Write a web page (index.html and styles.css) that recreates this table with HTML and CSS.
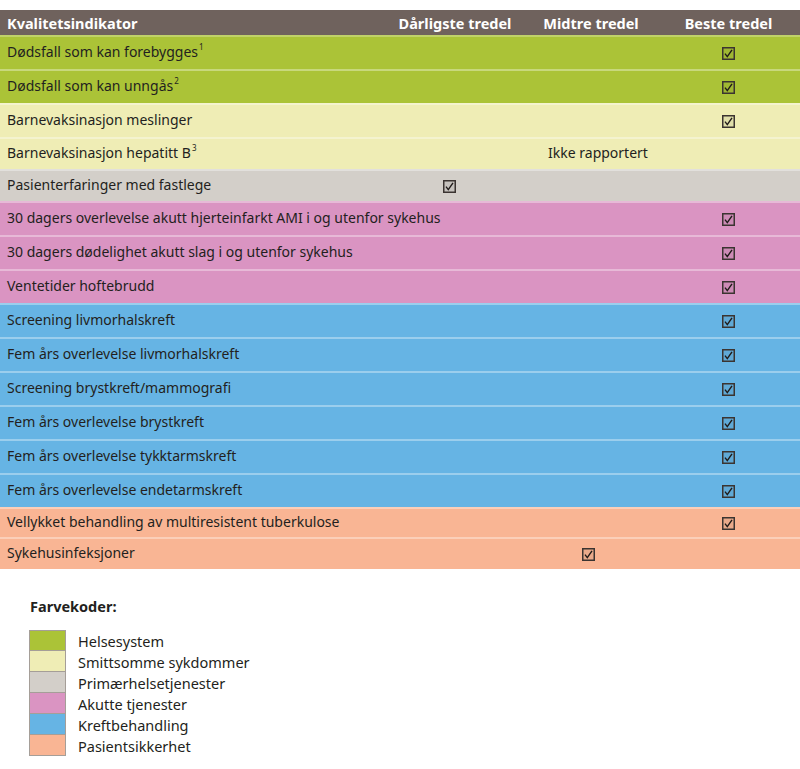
FILE: index.html
```html
<!DOCTYPE html>
<html lang="no">
<head>
<meta charset="utf-8">
<link rel="stylesheet" href="styles.css">
<title>Kvalitetsindikatorer</title>
</head>
<body>
<svg width="0" height="0" class="defs" aria-hidden="true">
  <defs>
    <symbol id="chk" viewBox="0 0 13 13">
      <rect x="0.75" y="0.75" width="11.5" height="11.5" fill="rgba(0,0,0,0.06)" stroke="#3b3431" stroke-width="1.5"/>
      <path d="M3 6.6 L5.3 9.6 L10 2.8" fill="none" stroke="#1f1a18" stroke-width="1.4" stroke-linejoin="miter"/>
    </symbol>
  </defs>
</svg>
<div class="table">
  <div class="row head">
    <div class="c1">Kvalitetsindikator</div>
    <div class="c2">Dårligste tredel</div>
    <div class="c3">Midtre tredel</div>
    <div class="c4">Beste tredel</div>
  </div>
  <div class="row green h34"><div class="c1">Dødsfall som kan forebygges<sup>1</sup></div><div class="c2"></div><div class="c3"></div><div class="c4"><svg class="ck"><use href="#chk"/></svg></div></div>
  <div class="row green h34"><div class="c1">Dødsfall som kan unngås<sup>2</sup></div><div class="c2"></div><div class="c3"></div><div class="c4"><svg class="ck"><use href="#chk"/></svg></div></div>
  <div class="row yellow h34"><div class="c1">Barnevaksinasjon meslinger</div><div class="c2"></div><div class="c3"></div><div class="c4"><svg class="ck"><use href="#chk"/></svg></div></div>
  <div class="row yellow h32"><div class="c1">Barnevaksinasjon hepatitt B<sup>3</sup></div><div class="c2"></div><div class="c3 txt">Ikke rapportert</div><div class="c4"></div></div>
  <div class="row grey h32"><div class="c1">Pasienterfaringer med fastlege</div><div class="c2"><svg class="ck"><use href="#chk"/></svg></div><div class="c3"></div><div class="c4"></div></div>
  <div class="row pink h34"><div class="c1">30 dagers overlevelse akutt hjerteinfarkt AMI i og utenfor sykehus</div><div class="c2"></div><div class="c3"></div><div class="c4"><svg class="ck"><use href="#chk"/></svg></div></div>
  <div class="row pink h34"><div class="c1">30 dagers dødelighet akutt slag i og utenfor sykehus</div><div class="c2"></div><div class="c3"></div><div class="c4"><svg class="ck"><use href="#chk"/></svg></div></div>
  <div class="row pink h34"><div class="c1">Ventetider hoftebrudd</div><div class="c2"></div><div class="c3"></div><div class="c4"><svg class="ck"><use href="#chk"/></svg></div></div>
  <div class="row blue h34"><div class="c1">Screening livmorhalskreft</div><div class="c2"></div><div class="c3"></div><div class="c4"><svg class="ck"><use href="#chk"/></svg></div></div>
  <div class="row blue h34"><div class="c1">Fem års overlevelse livmorhalskreft</div><div class="c2"></div><div class="c3"></div><div class="c4"><svg class="ck"><use href="#chk"/></svg></div></div>
  <div class="row blue h34"><div class="c1">Screening brystkreft/mammografi</div><div class="c2"></div><div class="c3"></div><div class="c4"><svg class="ck"><use href="#chk"/></svg></div></div>
  <div class="row blue h34"><div class="c1">Fem års overlevelse brystkreft</div><div class="c2"></div><div class="c3"></div><div class="c4"><svg class="ck"><use href="#chk"/></svg></div></div>
  <div class="row blue h34"><div class="c1">Fem års overlevelse tykktarmskreft</div><div class="c2"></div><div class="c3"></div><div class="c4"><svg class="ck"><use href="#chk"/></svg></div></div>
  <div class="row blue h34"><div class="c1">Fem års overlevelse endetarmskreft</div><div class="c2"></div><div class="c3"></div><div class="c4"><svg class="ck"><use href="#chk"/></svg></div></div>
  <div class="row orange h30"><div class="c1">Vellykket behandling av multiresistent tuberkulose</div><div class="c2"></div><div class="c3"></div><div class="c4"><svg class="ck"><use href="#chk"/></svg></div></div>
  <div class="row orange h32"><div class="c1">Sykehusinfeksjoner</div><div class="c2"></div><div class="c3 mid"><svg class="ck"><use href="#chk"/></svg></div><div class="c4"></div></div>
</div>

<div class="legend">
  <div class="legend-title">Farvekoder:</div>
  <ul class="legend-list">
    <li><span class="sw green"></span>Helsesystem</li>
    <li><span class="sw yellow"></span>Smittsomme sykdommer</li>
    <li><span class="sw grey"></span>Primærhelsetjenester</li>
    <li><span class="sw pink"></span>Akutte tjenester</li>
    <li><span class="sw blue"></span>Kreftbehandling</li>
    <li><span class="sw orange"></span>Pasientsikkerhet</li>
  </ul>
</div>
</body>
</html>
```
FILE: styles.css
```css
html, body {
  margin: 0;
  padding: 0;
  background: #ffffff;
}
body {
  font-family: "Noto Sans", "Open Sans", sans-serif;
  color: #231f20;
  font-size: 14px;
}
.defs {
  position: absolute;
  width: 0;
  height: 0;
}
.table {
  margin-top: 10px;
  width: 800px;
}
.row {
  display: grid;
  grid-template-columns: 385px 140px 132px 143px;
  align-items: center;
  box-sizing: border-box;
}
.row + .row {
  border-top: 2px solid rgba(255, 255, 255, 0.35);
}
.head + .row {
  border-top: 2px solid rgba(255, 255, 255, 0.25);
}
.head {
  height: 25px;
  background: #6f625d;
  color: #ffffff;
  font-weight: bold;
  font-size: 14.5px;
}
.head .c1 { padding-left: 7px; }
.head .c2, .head .c3, .head .c4 { text-align: center; }
.h34 { height: 34px; }
.h32 { height: 32px; }
.h30 { height: 30px; }
.c1 {
  padding-left: 7px;
  padding-bottom: 3px;
  white-space: nowrap;
}
.head .c1 { padding-bottom: 0; }
.c2, .c3, .c4 {
  display: flex;
  justify-content: center;
  align-items: center;
}
.txt { padding-left: 14px; padding-bottom: 3px; }
.mid { padding-right: 6px; }
.c2 .ck { margin-right: 12px; }
sup {
  font-size: 8px;
  vertical-align: top;
  position: relative;
  top: -1px;
  margin-left: 1px;
}
.ck {
  width: 13px;
  height: 13px;
  display: block;
}
.green { background: #abc337; }
.yellow { background: #efedb5; }
.grey { background: #d3cfc9; }
.pink { background: #da94c2; }
.blue { background: #66b4e4; }
.orange { background: #f9b594; }

.legend {
  padding: 27px 0 0 30px;
}
.legend-title {
  font-weight: bold;
  font-size: 14.5px;
  margin-bottom: 14px;
}
.legend-list {
  list-style: none;
  margin: 0;
  padding: 0;
}
.legend-list li {
  display: flex;
  align-items: center;
  height: 21px;
  font-size: 14.5px;
}
.sw {
  width: 37px;
  height: 21px;
  box-sizing: border-box;
  border: 1px solid #a59e98;
  border-top-width: 0;
  margin-left: -1px;
  margin-right: 12px;
}
.legend-list li:first-child .sw { border-top-width: 1px; }
```
